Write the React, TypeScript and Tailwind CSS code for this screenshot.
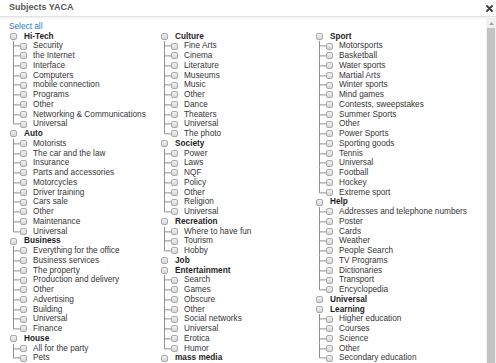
import React from 'react';

type Group = { name: string; items: string[] };

const columns: { width: string; groups: Group[] }[] = [
  {
    width: 'w-[151px]',
    groups: [
      {
        name: 'Hi-Tech',
        items: ['Security', 'the Internet', 'Interface', 'Computers', 'mobile connection', 'Programs', 'Other', 'Networking & Communications', 'Universal'],
      },
      {
        name: 'Auto',
        items: ['Motorists', 'The car and the law', 'Insurance', 'Parts and accessories', 'Motorcycles', 'Driver training', 'Cars sale', 'Other', 'Maintenance', 'Universal'],
      },
      {
        name: 'Business',
        items: ['Everything for the office', 'Business services', 'The property', 'Production and delivery', 'Other', 'Advertising', 'Building', 'Universal', 'Finance'],
      },
      { name: 'House', items: ['All for the party', 'Pets'] },
    ],
  },
  {
    width: 'w-[155px]',
    groups: [
      {
        name: 'Culture',
        items: ['Fine Arts', 'Cinema', 'Literature', 'Museums', 'Music', 'Other', 'Dance', 'Theaters', 'Universal', 'The photo'],
      },
      { name: 'Society', items: ['Power', 'Laws', 'NQF', 'Policy', 'Other', 'Religion', 'Universal'] },
      { name: 'Recreation', items: ['Where to have fun', 'Tourism', 'Hobby'] },
      { name: 'Job', items: [] },
      {
        name: 'Entertainment',
        items: ['Search', 'Games', 'Obscure', 'Other', 'Social networks', 'Universal', 'Erotica', 'Humor'],
      },
      { name: 'mass media', items: [] },
    ],
  },
  {
    width: 'flex-1',
    groups: [
      {
        name: 'Sport',
        items: ['Motorsports', 'Basketball', 'Water sports', 'Martial Arts', 'Winter sports', 'Mind games', 'Contests, sweepstakes', 'Summer Sports', 'Other', 'Power Sports', 'Sporting goods', 'Tennis', 'Universal', 'Football', 'Hockey', 'Extreme sport'],
      },
      {
        name: 'Help',
        items: ['Addresses and telephone numbers', 'Poster', 'Cards', 'Weather', 'People Search', 'TV Programs', 'Dictionaries', 'Transport', 'Encyclopedia'],
      },
      { name: 'Universal', items: [] },
      { name: 'Learning', items: ['Higher education', 'Courses', 'Science', 'Other', 'Secondary education'] },
    ],
  },
];

const Box = () => (
  <span className="inline-block w-[7px] h-[7px] shrink-0 rounded-[2px] border border-[#aaaaaa] bg-gradient-to-b from-[#f2f2f2] to-[#d6d6d6]" />
);

const Connector = ({ last }: { last: boolean }) => (
  <svg width="7" height="10" viewBox="0 0 7 10" className="shrink-0 h-[9.75px]" preserveAspectRatio="none">
    <line x1="0.5" y1="0" x2="0.5" y2={last ? 5 : 10} stroke="#8c8c8c" strokeWidth="1" />
    <line x1="0.5" y1="5" x2="7" y2="5" stroke="#8c8c8c" strokeWidth="1" />
  </svg>
);

const GroupBlock = ({ group }: { group: Group }) => (
  <div>
    <div className="flex items-center h-[9.75px]">
      <span className="ml-[1px] flex">
        <Box />
      </span>
      <span className="ml-[7px] font-bold text-[#1e1e1e] whitespace-nowrap">{group.name}</span>
    </div>
    {group.items.map((item, i) => (
      <div key={item + i} className="flex items-center h-[9.75px] pl-[4px]">
        <Connector last={i === group.items.length - 1} />
        <Box />
        <span className="ml-[6px] text-[#363636] whitespace-nowrap">{item}</span>
      </div>
    ))}
  </div>
);

export default function App() {
  return (
    <div
      className="w-[496px] h-[363px] overflow-hidden bg-white flex flex-col text-[8.25px] leading-[9.75px]"
      style={{ fontFamily: '"Liberation Sans", Arial, sans-serif' }}
    >
      <div className="h-[17px] shrink-0 flex items-center justify-between pl-[9px] pr-[3px] border-b border-[#e2e2e2] shadow-[0_1px_2px_rgba(0,0,0,0.08)]">
        <span className="text-[9px] font-bold text-[#555]">Subjects YACA</span>
        <svg width="7" height="7" viewBox="0 0 7 7">
          <path d="M1 1 L6 6 M6 1 L1 6" stroke="#3c3c3c" strokeWidth="1.8" strokeLinecap="round" />
        </svg>
      </div>
      <div className="flex flex-1 min-h-0 mt-[1px]">
        <div className="flex-1 min-w-0 pl-[9px] pt-[3.75px] overflow-hidden">
          <div className="h-[9.75px] text-[#2a78cf] whitespace-nowrap">Select all</div>
          <div className="flex">
            {columns.map((col, ci) => (
              <div key={ci} className={col.width + ' shrink-0'}>
                {col.groups.map((g) => (
                  <GroupBlock key={g.name} group={g} />
                ))}
              </div>
            ))}
          </div>
        </div>
        <div className="w-[10px] shrink-0 flex flex-col bg-[#f1f1f1]">
          <div className="h-[10px] flex items-center justify-center">
            <svg width="5" height="3" viewBox="0 0 5 3">
              <path d="M0 3 L2.5 0 L5 3 Z" fill="#a3a3a3" />
            </svg>
          </div>
          <div className="flex-1 mx-[1px] bg-[#c4c4c4]" />
        </div>
      </div>
    </div>
  );
}
